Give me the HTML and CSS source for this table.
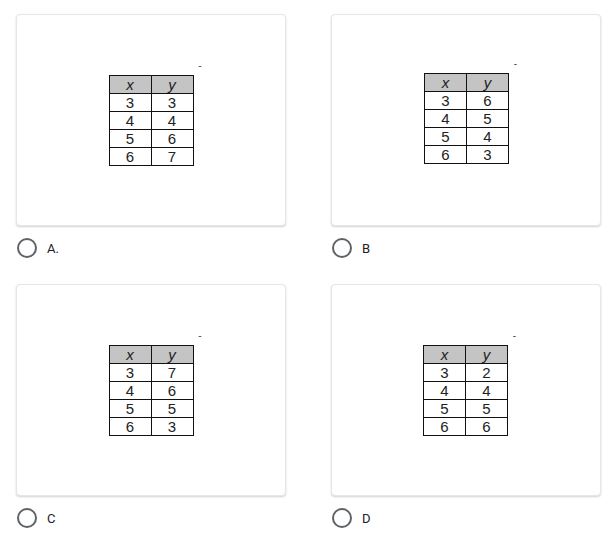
FILE: index.html
```html
<!DOCTYPE html>
<html>
<head>
<meta charset="utf-8">
<link rel="stylesheet" href="styles.css">
</head>
<body>
<div class="grid">
  <div class="option">
    <div class="card">
      <div class="figure">
        <span class="tick">-</span>
        <table class="xy">
          <tr><th>x</th><th>y</th></tr>
          <tr><td>3</td><td>3</td></tr>
          <tr><td>4</td><td>4</td></tr>
          <tr><td>5</td><td>6</td></tr>
          <tr><td>6</td><td>7</td></tr>
        </table>
      </div>
    </div>
    <label class="choice"><span class="radio"></span><span class="label">A.</span></label>
  </div>
  <div class="option">
    <div class="card">
      <div class="figure up">
        <span class="tick">-</span>
        <table class="xy">
          <tr><th>x</th><th>y</th></tr>
          <tr><td>3</td><td>6</td></tr>
          <tr><td>4</td><td>5</td></tr>
          <tr><td>5</td><td>4</td></tr>
          <tr><td>6</td><td>3</td></tr>
        </table>
      </div>
    </div>
    <label class="choice"><span class="radio"></span><span class="label">B</span></label>
  </div>
  <div class="option">
    <div class="card">
      <div class="figure">
        <span class="tick">-</span>
        <table class="xy">
          <tr><th>x</th><th>y</th></tr>
          <tr><td>3</td><td>7</td></tr>
          <tr><td>4</td><td>6</td></tr>
          <tr><td>5</td><td>5</td></tr>
          <tr><td>6</td><td>3</td></tr>
        </table>
      </div>
    </div>
    <label class="choice"><span class="radio"></span><span class="label">C</span></label>
  </div>
  <div class="option">
    <div class="card">
      <div class="figure left">
        <span class="tick">-</span>
        <table class="xy">
          <tr><th>x</th><th>y</th></tr>
          <tr><td>3</td><td>2</td></tr>
          <tr><td>4</td><td>4</td></tr>
          <tr><td>5</td><td>5</td></tr>
          <tr><td>6</td><td>6</td></tr>
        </table>
      </div>
    </div>
    <label class="choice"><span class="radio"></span><span class="label">D</span></label>
  </div>
</div>
</body>
</html>
```
FILE: styles.css
```css
html, body {
  margin: 0;
  padding: 0;
  background: #fff;
}
body {
  padding: 14px 0 0 16px;
  font-family: Roboto, "Liberation Sans", Arial, sans-serif;
}
.grid {
  display: grid;
  grid-template-columns: 270px 270px;
  column-gap: 45px;
  row-gap: 26px;
}
.option {
  display: flex;
  flex-direction: column;
}
.card {
  height: 212px;
  box-sizing: border-box;
  border: 1px solid #e6e6e6;
  border-radius: 4px;
  box-shadow: 0 1px 2px rgba(0, 0, 0, 0.18);
  display: flex;
  align-items: center;
  justify-content: center;
  background: #fff;
}
.figure {
  position: relative;
  margin-top: 1px;
}
.figure.up {
  margin-top: -3px;
  margin-left: 1px;
}
.figure.left {
  margin-left: -1px;
}
.tick {
  position: absolute;
  right: -8px;
  top: -14px;
  font-family: "Liberation Sans", Arial, sans-serif;
  font-size: 10px;
  line-height: 10px;
  color: #444;
}
.xy {
  border-collapse: collapse;
  font-family: "Liberation Sans", Arial, sans-serif;
  font-size: 15px;
  color: #222;
}
.xy th, .xy td {
  border: 1px solid #111;
  width: 41px;
  height: 17px;
  padding: 0;
  line-height: 17px;
  text-align: center;
}
.xy th {
  background: #c4c4c4;
  font-weight: normal;
  font-style: italic;
}
.choice {
  display: flex;
  align-items: center;
  margin-top: 12px;
  height: 20px;
}
.radio {
  box-sizing: border-box;
  width: 20px;
  height: 20px;
  border: 2px solid #5f6368;
  border-radius: 50%;
  margin-left: 1px;
}
.label {
  margin-left: 10px;
  font-size: 13px;
  color: #202124;
}
```
